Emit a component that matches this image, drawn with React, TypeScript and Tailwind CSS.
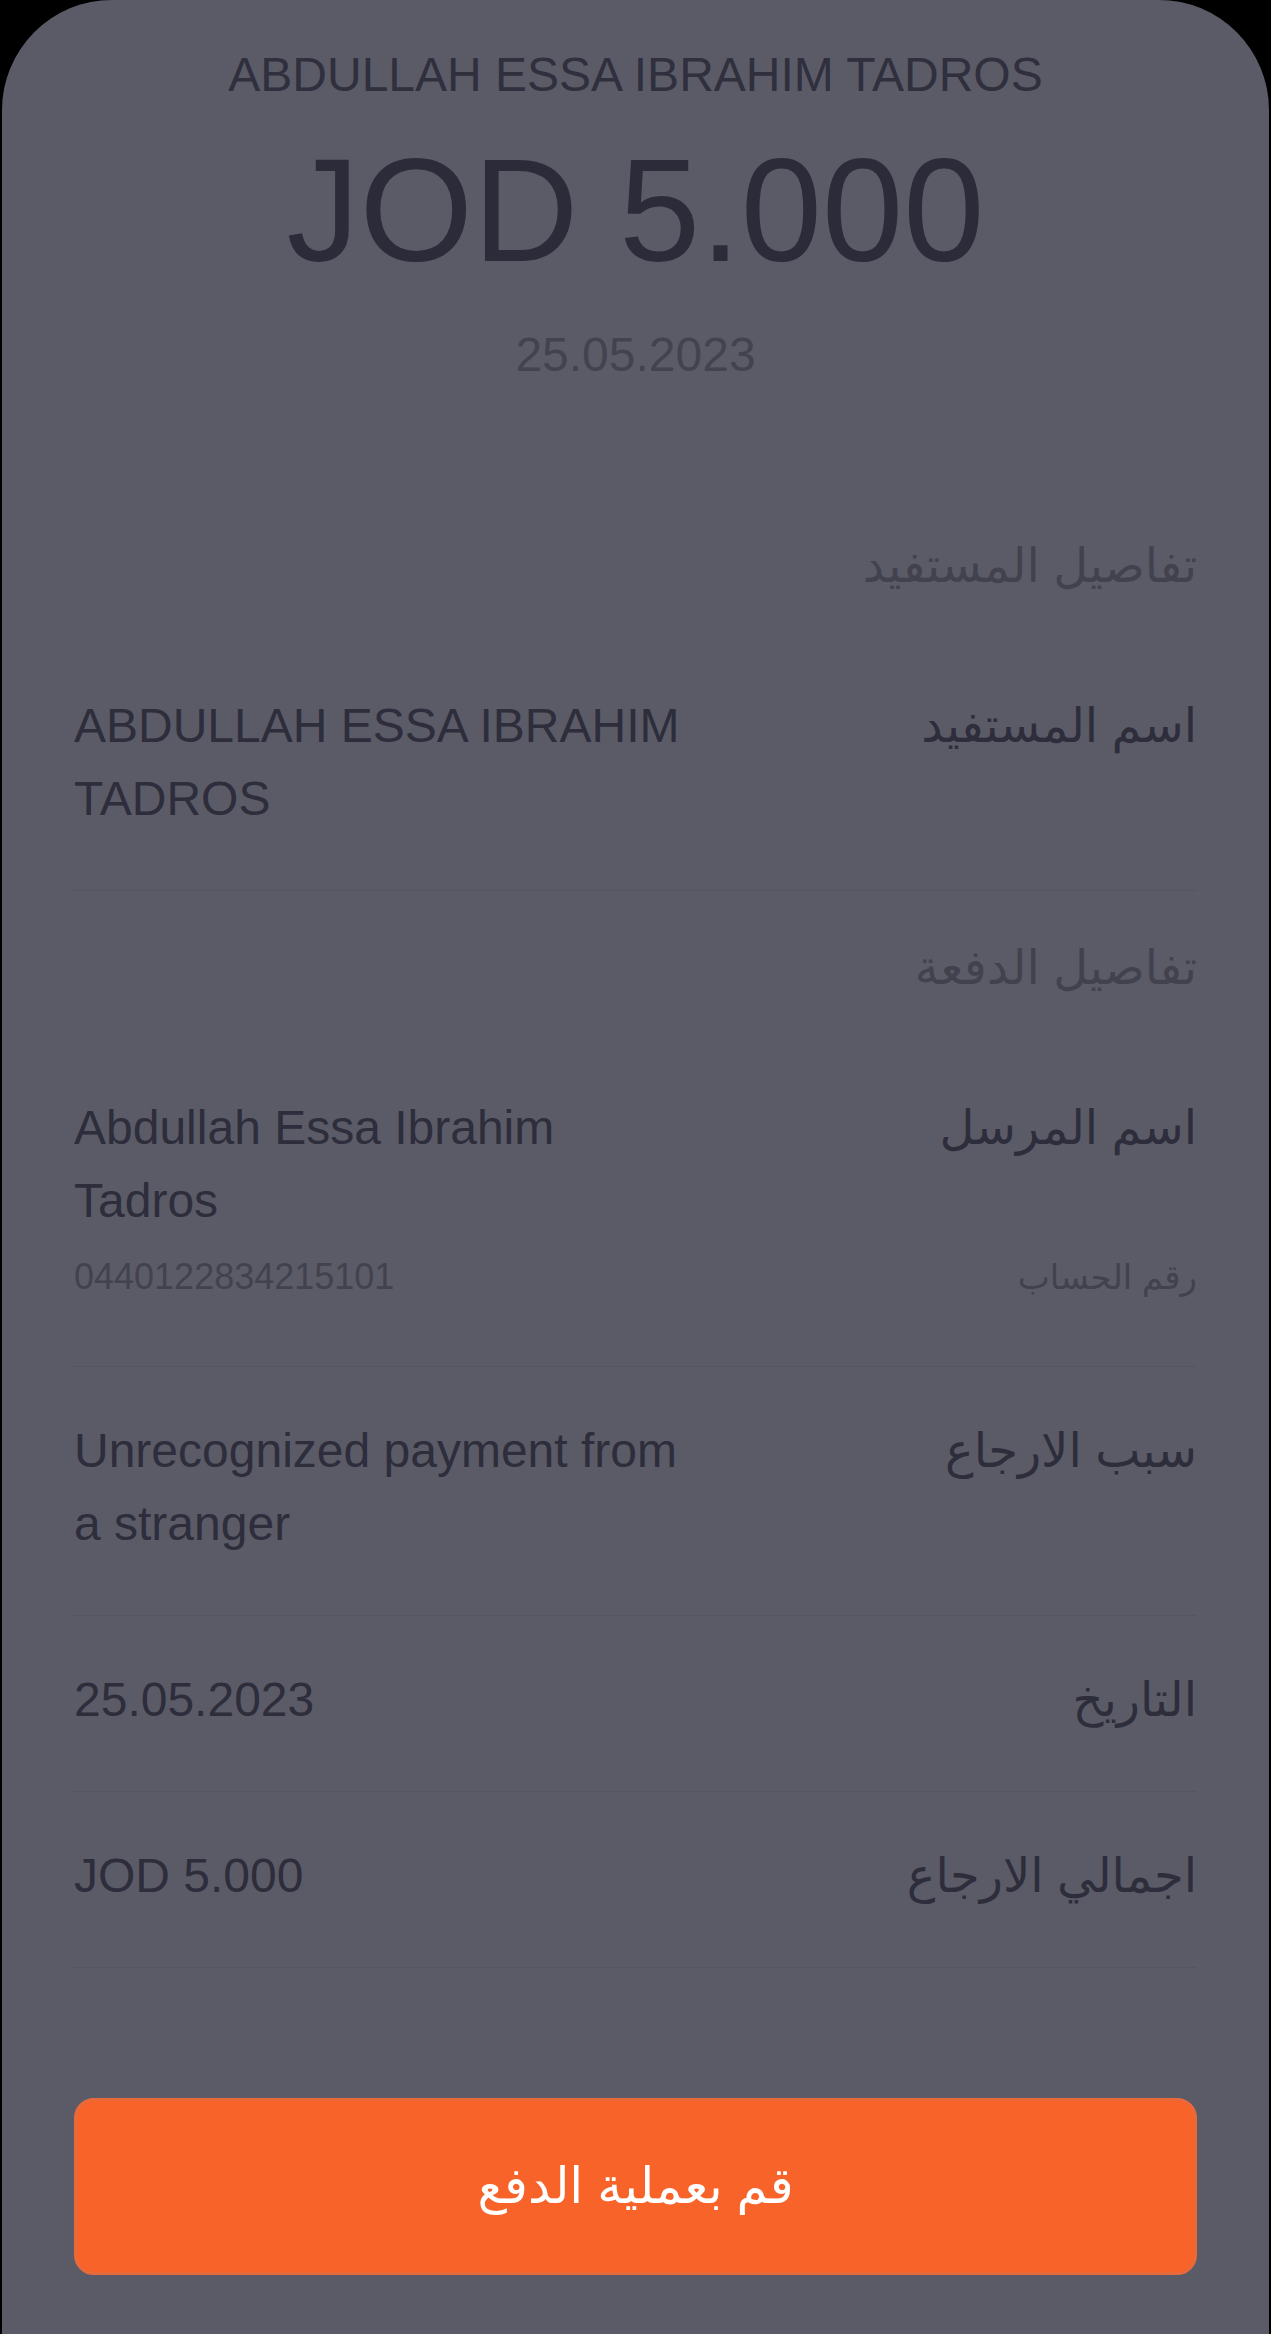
import React from 'react';

const font = { fontFamily: '"Liberation Sans", "DejaVu Sans", Arial, sans-serif' };

function SectionTitle({ children }: { children: React.ReactNode }) {
  return (
    <div dir="rtl" className="pt-10 pb-10 text-[48px] leading-[73px] text-[#42424f]">
      {children}
    </div>
  );
}

function Row({ label, value }: { label: string; value: string }) {
  return (
    <div className="flex justify-between border-b border-[#555560] pt-[47px] pb-[55px]">
      <div className="w-[620px] text-[48px] leading-[73px] text-[#2d2d3b]">{value}</div>
      <div dir="rtl" className="text-[48px] leading-[73px] text-[#2d2d3b]">
        {label}
      </div>
    </div>
  );
}

export default function App() {
  return (
    <div className="min-h-[2334px] bg-black" style={font}>
      <div className="mx-[2px] min-h-[2334px] rounded-t-[110px] bg-[#5b5b67]">
        {/* Header */}
        <div className="flex flex-col items-center pt-[47px] pb-[105px]">
          <div className="text-[48px] leading-[56px] text-[#2f2f3d]">
            ABDULLAH ESSA IBRAHIM TADROS
          </div>
          <div className="mt-[35px] text-[146px] leading-[146px] text-[#2b2b3a]">JOD 5.000</div>
          <div className="mt-[43px] text-[48px] leading-[56px] text-[#43434f]">25.05.2023</div>
        </div>

        {/* Details */}
        <div className="border-t border-[#595965] px-[72px]">
          <SectionTitle>تفاصيل المستفيد</SectionTitle>
          <Row label="اسم المستفيد" value="ABDULLAH ESSA IBRAHIM TADROS" />

          <SectionTitle>تفاصيل الدفعة</SectionTitle>
          <div className="border-b border-[#555560] pt-[47px] pb-[64px]">
            <div className="flex justify-between">
              <div className="w-[620px] text-[48px] leading-[73px] text-[#2d2d3b]">
                Abdullah Essa Ibrahim Tadros
              </div>
              <div dir="rtl" className="text-[48px] leading-[73px] text-[#2d2d3b]">
                اسم المرسل
              </div>
            </div>
            <div className="mt-[15px] flex justify-between text-[36px] leading-[50px] text-[#42424e]">
              <div>0440122834215101</div>
              <div dir="rtl" className="text-[34px]">
                رقم الحساب
              </div>
            </div>
          </div>

          <Row label="سبب الارجاع" value="Unrecognized payment from a stranger" />
          <Row label="التاريخ" value="25.05.2023" />
          <Row label="اجمالي الارجاع" value="JOD 5.000" />

          {/* Action */}
          <button
            dir="rtl"
            className="mt-[130px] flex h-[177px] w-full items-center justify-center rounded-[20px] border-[3px] border-[#e86a3a] bg-[#f8632a] text-[50px] text-white"
          >
            قم بعملية الدفع
          </button>
        </div>
      </div>
    </div>
  );
}
